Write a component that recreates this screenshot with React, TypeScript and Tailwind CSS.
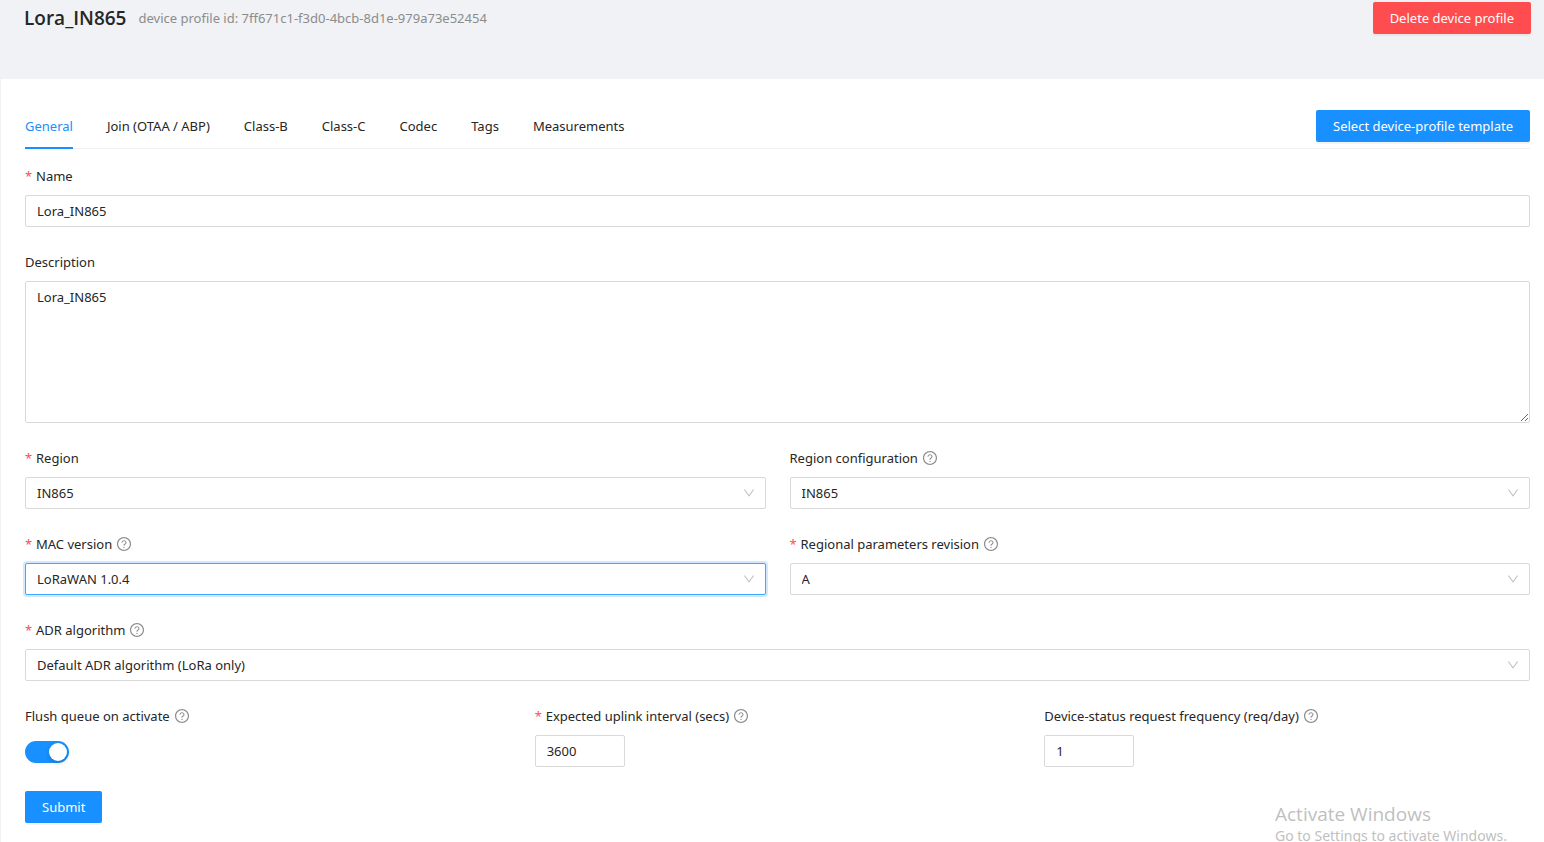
import { useId, useState } from "react";
import type { ReactNode } from "react";
import { AiOutlineDown, AiOutlineQuestionCircle } from "react-icons/ai";

const control =
  "block h-8 rounded-xs border border-[#d9d9d9] bg-white px-[11px] text-[#262626] outline-none focus:border-[#40a9ff] focus:shadow-[0_0_0_2px_rgba(24,144,255,0.2)]";

const primaryButton =
  "h-8 rounded-xs bg-[#1890ff] px-[17px] text-white shadow-[0_2px_0_rgba(0,0,0,0.045)]";

type FieldProps = {
  id: string;
  label: string;
  required?: boolean;
  help?: boolean;
  children: ReactNode;
};

function Field({ id, label, required, help, children }: FieldProps) {
  return (
    <div className="mb-6 min-w-0">
      <div className="mb-2 flex h-[22px] items-center">
        {required && <span className="mr-1 w-[7px] text-[#ff4d4f]">*</span>}
        <label htmlFor={id}>{label}</label>
        {help && <AiOutlineQuestionCircle className="ml-1 size-4 text-[#8c8c8c]" />}
      </div>
      {children}
    </div>
  );
}

type SelectFieldProps = {
  label: string;
  value: string;
  required?: boolean;
  help?: boolean;
  active?: boolean;
};

function SelectField({ label, value, required, help, active }: SelectFieldProps) {
  const id = useId();
  return (
    <Field id={id} label={label} required={required} help={help}>
      <div className="relative">
        <select
          id={id}
          defaultValue={value}
          className={
            active
              ? "block h-8 w-full appearance-none rounded-xs border border-[#40a9ff] bg-white px-[11px] shadow-[0_0_0_2px_rgba(24,144,255,0.2)] outline-none"
              : `${control} w-full appearance-none`
          }
        >
          <option>{value}</option>
        </select>
        <AiOutlineDown
          viewBox="64 64 896 896"
          className="pointer-events-none absolute top-[10px] right-[11px] size-3 text-[#bfbfbf]"
        />
      </div>
    </Field>
  );
}

const tabs = ["General", "Join (OTAA / ABP)", "Class-B", "Class-C", "Codec", "Tags", "Measurements"];

export default function App() {
  const [tab, setTab] = useState("General");
  const [flush, setFlush] = useState(true);

  return (
    <div className="relative flex min-h-screen flex-col overflow-hidden bg-[#f0f2f5] font-['Noto_Sans',sans-serif] text-[13px] leading-[22px] text-[#262626]">
      <header className="flex items-center pt-[2px] pr-[13px] pb-[45px] pl-6">
        <h1 className="mr-3 font-['Open_Sans',sans-serif] text-[19px] leading-8 font-semibold">
          Lora_IN865
        </h1>
        <span className="text-[#8c8c8c]">device profile id: 7ff671c1-f3d0-4bcb-8d1e-979a73e52454</span>
        <button
          type="button"
          className="ml-auto h-8 rounded-xs bg-[#ff4d4f] px-[17px] text-white shadow-[0_2px_0_rgba(0,0,0,0.045)]"
        >
          Delete device profile
        </button>
      </header>

      <main className="ml-px grow bg-white pt-6 pr-[14px] pb-[19px] pl-6">
        <div className="mb-4 flex h-[46px] items-stretch border-b border-[#f0f0f0]">
          <div role="tablist" className="flex gap-[34px]">
            {tabs.map((name) => (
              <button
                key={name}
                type="button"
                role="tab"
                aria-selected={tab === name}
                onClick={() => setTab(name)}
                className={
                  tab === name
                    ? "-mb-px border-b-2 border-[#1890ff] pt-[2px] text-[#1890ff]"
                    : "-mb-px border-b-2 border-transparent pt-[2px]"
                }
              >
                {name}
              </button>
            ))}
          </div>
          <button type="button" className={`${primaryButton} ml-auto self-center`}>
            Select device-profile template
          </button>
        </div>

        <form onSubmit={(e) => e.preventDefault()}>
          <Field id="name" label="Name" required>
            <input id="name" type="text" defaultValue="Lora_IN865" className={`${control} w-full`} />
          </Field>
          <Field id="description" label="Description">
            <textarea
              id="description"
              defaultValue="Lora_IN865"
              className="block h-[142px] w-full resize-y rounded-xs border border-[#d9d9d9] px-[11px] py-1 outline-none focus:border-[#40a9ff]"
            />
          </Field>

          <div className="grid grid-cols-2 gap-x-6">
            <SelectField label="Region" value="IN865" required />
            <SelectField label="Region configuration" value="IN865" help />
            <SelectField label="MAC version" value="LoRaWAN 1.0.4" required help active />
            <SelectField label="Regional parameters revision" value="A" required help />
          </div>
          <SelectField label="ADR algorithm" value="Default ADR algorithm (LoRa only)" required help />

          <div className="grid grid-cols-3 gap-x-6">
            <Field id="flush" label="Flush queue on activate" help>
              <div className="flex h-8 items-center pt-[2px]">
                <input
                  id="flush"
                  type="checkbox"
                  role="switch"
                  checked={flush}
                  onChange={(e) => setFlush(e.target.checked)}
                  className="h-[22px] w-11 appearance-none rounded-full bg-[#bfbfbf] p-[2px] before:block before:size-[18px] before:rounded-full before:bg-white before:shadow-[0_2px_4px_rgba(0,35,11,0.2)] checked:bg-[#1890ff] checked:before:ml-auto"
                />
              </div>
            </Field>
            <Field id="uplink" label="Expected uplink interval (secs)" required help>
              <input
                id="uplink"
                type="number"
                defaultValue={3600}
                className={`${control} w-[90px] [appearance:textfield]`}
              />
            </Field>
            <Field id="status" label="Device-status request frequency (req/day)" help>
              <input
                id="status"
                type="number"
                defaultValue={1}
                className={`${control} w-[90px] [appearance:textfield]`}
              />
            </Field>
          </div>

          <button type="submit" className={primaryButton}>
            Submit
          </button>
        </form>
      </main>

      <div className="pointer-events-none absolute right-0 -bottom-1 w-[269px] text-[#bfbfbf]">
        <p className="font-['Open_Sans',sans-serif] text-[19px] leading-6">Activate Windows</p>
        <p className="text-[14px] leading-5">Go to Settings to activate Windows.</p>
      </div>
    </div>
  );
}
